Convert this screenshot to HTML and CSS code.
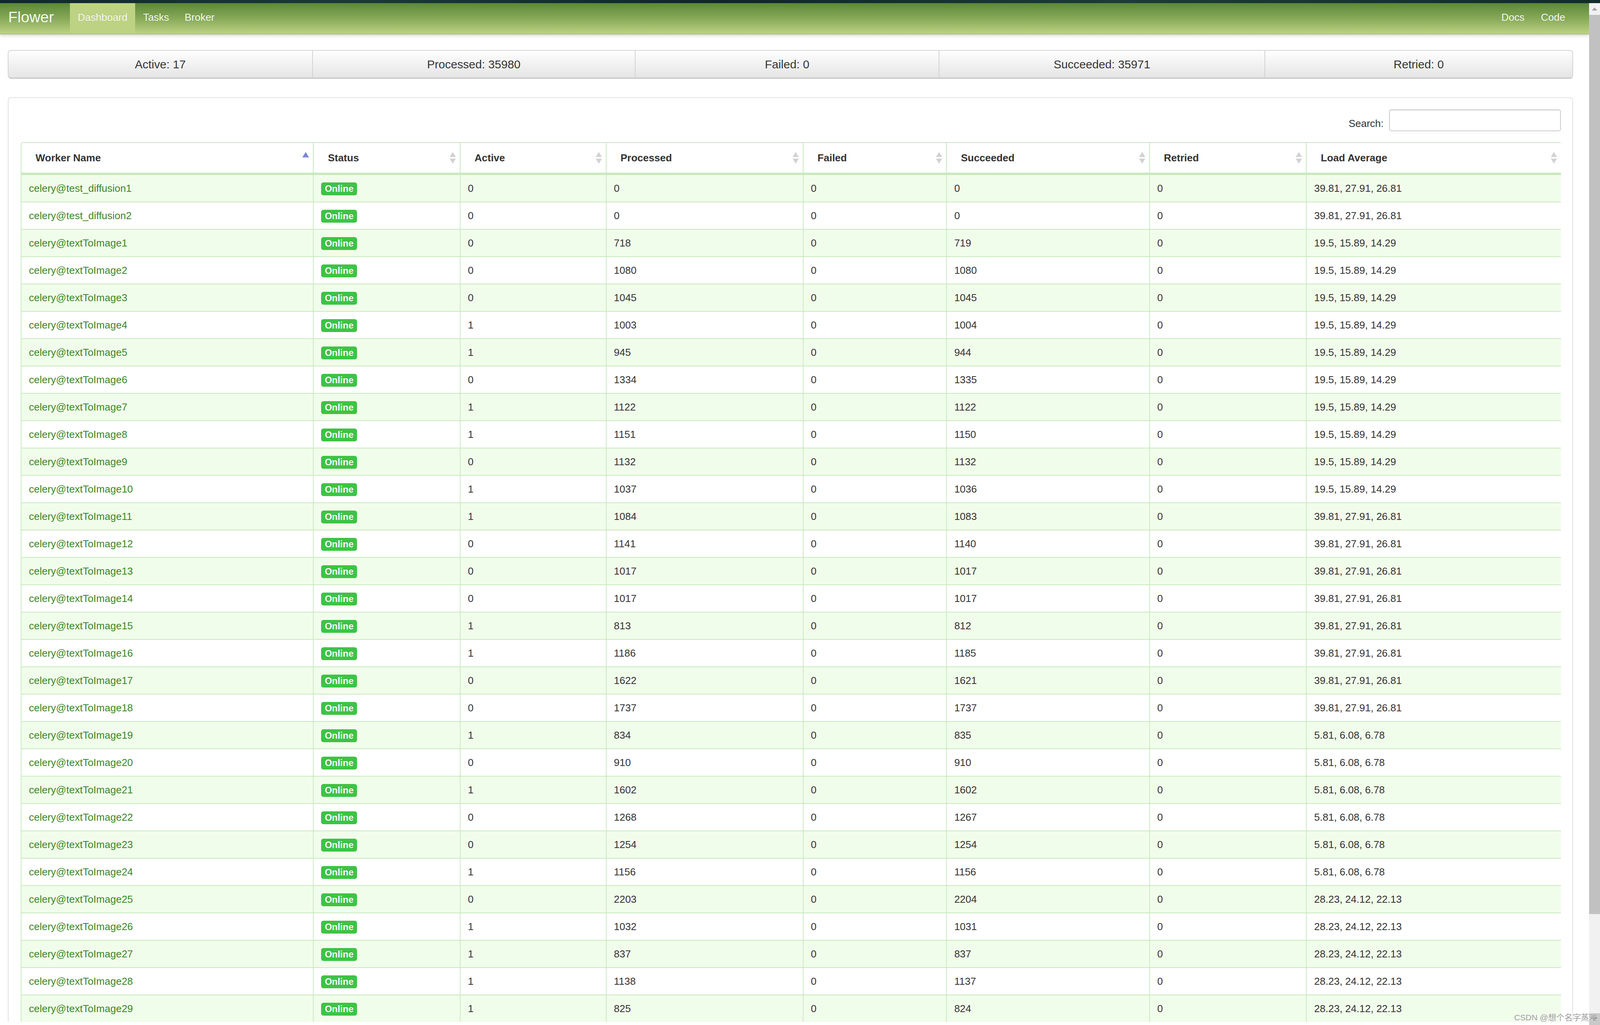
FILE: index.html
```html
<!DOCTYPE html>
<html lang="en">
<head>
<meta charset="utf-8">
<title>Flower</title>
<link rel="stylesheet" href="styles.css">
</head>
<body>
<div class="topstrip"></div>
<div class="frame">
  <div class="page">
    <header class="navbar">
      <a class="brand" href="#">Flower</a>
      <nav class="nav">
        <a class="active" href="#">Dashboard</a>
        <a href="#">Tasks</a>
        <a href="#">Broker</a>
      </nav>
      <nav class="nav nav-right">
        <a href="#">Docs</a>
        <a href="#">Code</a>
      </nav>
    </header>
    <main class="container">
      <div class="stats">
        <div class="stat">Active: 17</div>
        <div class="stat">Processed: 35980</div>
        <div class="stat">Failed: 0</div>
        <div class="stat">Succeeded: 35971</div>
        <div class="stat">Retried: 0</div>
      </div>
      <section class="panel">
        <div class="search">
          <label for="q">Search:</label>
          <input id="q" type="search">
        </div>
        <table class="workers">
          <thead>
            <tr>
              <th class="c1"><div class="th-in"><span>Worker Name</span><svg class="sort" width="17" height="30" viewBox="0 0 17 30"><path d="M8.5 0 L17 14 H0 Z" fill="#7c86d8"/></svg></div></th>
              <th class="c2"><div class="th-in"><span>Status</span><svg class="sort" width="16" height="30" viewBox="0 0 16 30"><path d="M8 0 L16 13 H0 Z" fill="#d2d2d2"/><path d="M0 17 H16 L8 30 Z" fill="#d2d2d2"/></svg></div></th>
              <th class="c3"><div class="th-in"><span>Active</span><svg class="sort" width="16" height="30" viewBox="0 0 16 30"><path d="M8 0 L16 13 H0 Z" fill="#d2d2d2"/><path d="M0 17 H16 L8 30 Z" fill="#d2d2d2"/></svg></div></th>
              <th class="c4"><div class="th-in"><span>Processed</span><svg class="sort" width="16" height="30" viewBox="0 0 16 30"><path d="M8 0 L16 13 H0 Z" fill="#d2d2d2"/><path d="M0 17 H16 L8 30 Z" fill="#d2d2d2"/></svg></div></th>
              <th class="c5"><div class="th-in"><span>Failed</span><svg class="sort" width="16" height="30" viewBox="0 0 16 30"><path d="M8 0 L16 13 H0 Z" fill="#d2d2d2"/><path d="M0 17 H16 L8 30 Z" fill="#d2d2d2"/></svg></div></th>
              <th class="c6"><div class="th-in"><span>Succeeded</span><svg class="sort" width="16" height="30" viewBox="0 0 16 30"><path d="M8 0 L16 13 H0 Z" fill="#d2d2d2"/><path d="M0 17 H16 L8 30 Z" fill="#d2d2d2"/></svg></div></th>
              <th class="c7"><div class="th-in"><span>Retried</span><svg class="sort" width="16" height="30" viewBox="0 0 16 30"><path d="M8 0 L16 13 H0 Z" fill="#d2d2d2"/><path d="M0 17 H16 L8 30 Z" fill="#d2d2d2"/></svg></div></th>
              <th class="c8"><div class="th-in"><span>Load Average</span><svg class="sort" width="16" height="30" viewBox="0 0 16 30"><path d="M8 0 L16 13 H0 Z" fill="#d2d2d2"/><path d="M0 17 H16 L8 30 Z" fill="#d2d2d2"/></svg></div></th>
            </tr>
          </thead>
          <tbody>
            <tr><td><a href="#">celery@test_diffusion1</a></td><td><span class="badge">Online</span></td><td>0</td><td>0</td><td>0</td><td>0</td><td>0</td><td>39.81, 27.91, 26.81</td></tr>
            <tr><td><a href="#">celery@test_diffusion2</a></td><td><span class="badge">Online</span></td><td>0</td><td>0</td><td>0</td><td>0</td><td>0</td><td>39.81, 27.91, 26.81</td></tr>
            <tr><td><a href="#">celery@textToImage1</a></td><td><span class="badge">Online</span></td><td>0</td><td>718</td><td>0</td><td>719</td><td>0</td><td>19.5, 15.89, 14.29</td></tr>
            <tr><td><a href="#">celery@textToImage2</a></td><td><span class="badge">Online</span></td><td>0</td><td>1080</td><td>0</td><td>1080</td><td>0</td><td>19.5, 15.89, 14.29</td></tr>
            <tr><td><a href="#">celery@textToImage3</a></td><td><span class="badge">Online</span></td><td>0</td><td>1045</td><td>0</td><td>1045</td><td>0</td><td>19.5, 15.89, 14.29</td></tr>
            <tr><td><a href="#">celery@textToImage4</a></td><td><span class="badge">Online</span></td><td>1</td><td>1003</td><td>0</td><td>1004</td><td>0</td><td>19.5, 15.89, 14.29</td></tr>
            <tr><td><a href="#">celery@textToImage5</a></td><td><span class="badge">Online</span></td><td>1</td><td>945</td><td>0</td><td>944</td><td>0</td><td>19.5, 15.89, 14.29</td></tr>
            <tr><td><a href="#">celery@textToImage6</a></td><td><span class="badge">Online</span></td><td>0</td><td>1334</td><td>0</td><td>1335</td><td>0</td><td>19.5, 15.89, 14.29</td></tr>
            <tr><td><a href="#">celery@textToImage7</a></td><td><span class="badge">Online</span></td><td>1</td><td>1122</td><td>0</td><td>1122</td><td>0</td><td>19.5, 15.89, 14.29</td></tr>
            <tr><td><a href="#">celery@textToImage8</a></td><td><span class="badge">Online</span></td><td>1</td><td>1151</td><td>0</td><td>1150</td><td>0</td><td>19.5, 15.89, 14.29</td></tr>
            <tr><td><a href="#">celery@textToImage9</a></td><td><span class="badge">Online</span></td><td>0</td><td>1132</td><td>0</td><td>1132</td><td>0</td><td>19.5, 15.89, 14.29</td></tr>
            <tr><td><a href="#">celery@textToImage10</a></td><td><span class="badge">Online</span></td><td>1</td><td>1037</td><td>0</td><td>1036</td><td>0</td><td>19.5, 15.89, 14.29</td></tr>
            <tr><td><a href="#">celery@textToImage11</a></td><td><span class="badge">Online</span></td><td>1</td><td>1084</td><td>0</td><td>1083</td><td>0</td><td>39.81, 27.91, 26.81</td></tr>
            <tr><td><a href="#">celery@textToImage12</a></td><td><span class="badge">Online</span></td><td>0</td><td>1141</td><td>0</td><td>1140</td><td>0</td><td>39.81, 27.91, 26.81</td></tr>
            <tr><td><a href="#">celery@textToImage13</a></td><td><span class="badge">Online</span></td><td>0</td><td>1017</td><td>0</td><td>1017</td><td>0</td><td>39.81, 27.91, 26.81</td></tr>
            <tr><td><a href="#">celery@textToImage14</a></td><td><span class="badge">Online</span></td><td>0</td><td>1017</td><td>0</td><td>1017</td><td>0</td><td>39.81, 27.91, 26.81</td></tr>
            <tr><td><a href="#">celery@textToImage15</a></td><td><span class="badge">Online</span></td><td>1</td><td>813</td><td>0</td><td>812</td><td>0</td><td>39.81, 27.91, 26.81</td></tr>
            <tr><td><a href="#">celery@textToImage16</a></td><td><span class="badge">Online</span></td><td>1</td><td>1186</td><td>0</td><td>1185</td><td>0</td><td>39.81, 27.91, 26.81</td></tr>
            <tr><td><a href="#">celery@textToImage17</a></td><td><span class="badge">Online</span></td><td>0</td><td>1622</td><td>0</td><td>1621</td><td>0</td><td>39.81, 27.91, 26.81</td></tr>
            <tr><td><a href="#">celery@textToImage18</a></td><td><span class="badge">Online</span></td><td>0</td><td>1737</td><td>0</td><td>1737</td><td>0</td><td>39.81, 27.91, 26.81</td></tr>
            <tr><td><a href="#">celery@textToImage19</a></td><td><span class="badge">Online</span></td><td>1</td><td>834</td><td>0</td><td>835</td><td>0</td><td>5.81, 6.08, 6.78</td></tr>
            <tr><td><a href="#">celery@textToImage20</a></td><td><span class="badge">Online</span></td><td>0</td><td>910</td><td>0</td><td>910</td><td>0</td><td>5.81, 6.08, 6.78</td></tr>
            <tr><td><a href="#">celery@textToImage21</a></td><td><span class="badge">Online</span></td><td>1</td><td>1602</td><td>0</td><td>1602</td><td>0</td><td>5.81, 6.08, 6.78</td></tr>
            <tr><td><a href="#">celery@textToImage22</a></td><td><span class="badge">Online</span></td><td>0</td><td>1268</td><td>0</td><td>1267</td><td>0</td><td>5.81, 6.08, 6.78</td></tr>
            <tr><td><a href="#">celery@textToImage23</a></td><td><span class="badge">Online</span></td><td>0</td><td>1254</td><td>0</td><td>1254</td><td>0</td><td>5.81, 6.08, 6.78</td></tr>
            <tr><td><a href="#">celery@textToImage24</a></td><td><span class="badge">Online</span></td><td>1</td><td>1156</td><td>0</td><td>1156</td><td>0</td><td>5.81, 6.08, 6.78</td></tr>
            <tr><td><a href="#">celery@textToImage25</a></td><td><span class="badge">Online</span></td><td>0</td><td>2203</td><td>0</td><td>2204</td><td>0</td><td>28.23, 24.12, 22.13</td></tr>
            <tr><td><a href="#">celery@textToImage26</a></td><td><span class="badge">Online</span></td><td>1</td><td>1032</td><td>0</td><td>1031</td><td>0</td><td>28.23, 24.12, 22.13</td></tr>
            <tr><td><a href="#">celery@textToImage27</a></td><td><span class="badge">Online</span></td><td>1</td><td>837</td><td>0</td><td>837</td><td>0</td><td>28.23, 24.12, 22.13</td></tr>
            <tr><td><a href="#">celery@textToImage28</a></td><td><span class="badge">Online</span></td><td>1</td><td>1138</td><td>0</td><td>1137</td><td>0</td><td>28.23, 24.12, 22.13</td></tr>
            <tr><td><a href="#">celery@textToImage29</a></td><td><span class="badge">Online</span></td><td>1</td><td>825</td><td>0</td><td>824</td><td>0</td><td>28.23, 24.12, 22.13</td></tr>
          </tbody>
        </table>
      </section>
    </main>
  </div>
  <div class="scrollbar">
    <div class="sb-btn sb-up"><svg width="14" height="8" viewBox="0 0 14 8"><path d="M7 0 L14 8 H0 Z" fill="#a3a3a3"/></svg></div>
    <div class="sb-thumb"></div>
    <div class="sb-track"></div>
    <div class="sb-btn sb-down"><svg width="14" height="8" viewBox="0 0 14 8"><path d="M0 0 H14 L7 8 Z" fill="#505050"/></svg></div>
  </div>
</div>
<div class="watermark">CSDN @想个名字蒸难</div>
</body>
</html>
```
FILE: styles.css
```css
* { box-sizing: border-box; }

html, body { margin: 0; padding: 0; }

html { height: 100%; }

body {
  width: 100%;
  height: 100vh;
  overflow: hidden;
  position: relative;
  font-family: "Liberation Sans", Arial, "Noto Sans CJK SC", sans-serif;
  font-size: 26px;
  line-height: 36px;
  color: #333;
  background: #fff;
}

a { text-decoration: none; }

.topstrip {
  height: 8px;
  background: linear-gradient(90deg, #10282b 0%, #1b3939 22%, #0f2629 45%, #1d3b3a 70%, #122b2d 100%);
}

.frame {
  display: flex;
  height: calc(100vh - 8px);
}

.page {
  flex: 1;
  min-width: 0;
  overflow: hidden;
}

/* navbar */
.navbar {
  display: flex;
  height: 80px;
  background: linear-gradient(#5c8839 0%, #86a957 50%, #bcd283 100%);
  border-bottom: 2px solid #a8bf71;
  box-shadow: 0 3px 8px rgba(0, 0, 0, 0.18);
  position: relative;
  z-index: 1;
}

.brand {
  padding: 14px 41px 0 21px;
  font-size: 39px;
  line-height: 44px;
  color: #f4f8ee;
  text-shadow: 0 -1px 0 rgba(0, 0, 0, 0.12);
}

.nav {
  display: flex;
}

.nav a {
  padding: 18px 20px 0;
  color: #f6f8f1;
  text-shadow: 0 -1px 0 rgba(0, 0, 0, 0.15);
}

.nav a.active {
  background: #bed283;
}

.nav-right {
  margin-left: auto;
  margin-right: 41px;
}

.nav-right a + a { margin-left: 2px; }

/* content */
.container {
  padding: 40px 41px 0 20px;
}

.stats {
  display: grid;
  grid-template-columns: 944fr 1004fr 946fr 1013fr 958fr;
  height: 73px;
  border: 2px solid #d6d6d6;
  border-bottom-color: #b9b9b9;
  border-radius: 8px;
  background: linear-gradient(#fefefe, #e5e5e5);
  box-shadow: 0 2px 4px rgba(0, 0, 0, 0.06);
}

.stat {
  text-align: center;
  font-size: 29.7px;
  line-height: 69px;
  color: #333;
  text-shadow: 0 1px 1px rgba(255, 255, 255, 0.75);
  border-left: 2px solid #d3d3d3;
  white-space: nowrap;
}

.stat:first-child { border-left: none; }

.panel {
  margin-top: 48px;
  border: 2px solid #e3e3e3;
  border-bottom: none;
  border-radius: 8px 8px 0 0;
  padding: 29px 29px 0 31px;
  background: #fff;
}

.search {
  display: flex;
  justify-content: flex-end;
  align-items: flex-end;
  gap: 14px;
  margin-bottom: 28px;
}

.search label {
  margin-bottom: 2px;
}

.search input {
  width: 440px;
  height: 56px;
  margin: 0;
  border: 2px solid #cccccc;
  border-radius: 6px;
  box-shadow: inset 0 2px 2px rgba(0, 0, 0, 0.075);
  font: inherit;
  padding: 0 12px;
  background: #fff;
}

/* table */
.workers {
  width: 100%;
  table-layout: fixed;
  border-collapse: separate;
  border-spacing: 0;
}

.workers th {
  text-align: left;
  font-weight: bold;
  padding: 20px 10px 20px 36px;
  border-top: 2px solid #c8e9be;
  border-left: 2px solid #c8e9be;
  border-bottom: 4px solid #c8e9be;
  background: #fff;
  color: #333;
}

.workers th:first-child { border-top-left-radius: 6px; }
.workers th:last-child { border-top-right-radius: 6px; }

.workers .c1 { width: 18.98%; }
.workers .c2 { width: 9.52%; }
.workers .c3 { width: 9.48%; }
.workers .c4 { width: 12.79%; }
.workers .c5 { width: 9.31%; }
.workers .c6 { width: 13.18%; }
.workers .c7 { width: 10.19%; }
.workers .c8 { width: 16.55%; }

.th-in {
  display: flex;
  justify-content: space-between;
  align-items: center;
}

.th-in span { white-space: nowrap; }

.sort { display: block; flex: none; }

.workers td {
  padding: 16px 18px 16px 19px;
  border-top: 2px solid #c8e9be;
  border-left: 2px solid #cbeac2;
  white-space: nowrap;
  overflow: hidden;
  color: #333;
}

.workers tbody tr:nth-child(odd) td {
  background: #f1fdeb;
}

.workers td a {
  color: #3a8728;
}

.badge {
  display: inline-block;
  padding: 3px 9px 4px;
  font-size: 23.7px;
  line-height: 26px;
  font-weight: bold;
  color: #fff;
  background: #3dc443;
  border-radius: 6px;
  text-shadow: 0 -1px 0 rgba(0, 0, 0, 0.25);
}

/* fake scrollbar */
.scrollbar {
  width: 28px;
  flex: none;
  display: flex;
  flex-direction: column;
  background: #f1f1f1;
}

.sb-btn {
  height: 30px;
  flex: none;
  display: flex;
  align-items: center;
  justify-content: center;
}

.sb-down { background: #c9c9c9; }

.sb-thumb {
  height: 88%;
  flex: none;
  background: #c1c1c1;
}

.sb-track { flex: 1; }

.watermark {
  position: absolute;
  right: 7px;
  bottom: 6px;
  font-family: "Liberation Sans", "Noto Sans CJK SC", sans-serif;
  font-size: 21px;
  line-height: 26px;
  color: #9b9b9b;
  text-shadow: 0 0 2px #fff, 0 0 1px #fff;
  white-space: nowrap;
}
```
